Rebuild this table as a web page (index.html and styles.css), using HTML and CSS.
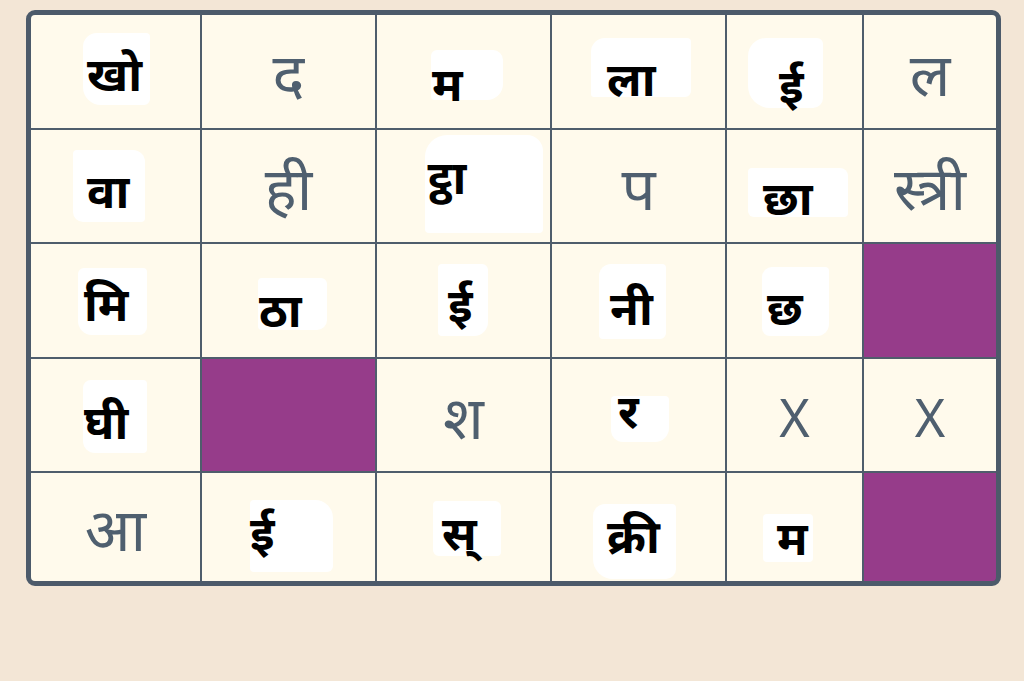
FILE: index.html
```html
<!DOCTYPE html>
<html lang="hi">
<head>
<meta charset="utf-8">
<title>Grid</title>
<link rel="stylesheet" href="styles.css">
</head>
<body>
<div class="board">
  <div class="cell"><div class="patch p-a"><span>खो</span></div></div>
  <div class="cell center"><span class="plain">द</span></div>
  <div class="cell"><div class="patch p-b"><span>म</span></div></div>
  <div class="cell"><div class="patch p-c"><span>ला</span></div></div>
  <div class="cell"><div class="patch p-d"><span>ई</span></div></div>
  <div class="cell center"><span class="plain">ल</span></div>

  <div class="cell"><div class="patch p-e"><span>वा</span></div></div>
  <div class="cell center"><span class="plain">ही</span></div>
  <div class="cell"><div class="patch p-f"><span>ट्ठा</span></div></div>
  <div class="cell center"><span class="plain">प</span></div>
  <div class="cell"><div class="patch p-g"><span>छा</span></div></div>
  <div class="cell center"><span class="plain">स्त्री</span></div>

  <div class="cell"><div class="patch p-h"><span>मि</span></div></div>
  <div class="cell"><div class="patch p-i"><span>ठा</span></div></div>
  <div class="cell"><div class="patch p-j"><span>ई</span></div></div>
  <div class="cell"><div class="patch p-k"><span>नी</span></div></div>
  <div class="cell"><div class="patch p-l"><span>छ</span></div></div>
  <div class="cell filled"></div>

  <div class="cell"><div class="patch p-m"><span>घी</span></div></div>
  <div class="cell filled"></div>
  <div class="cell center"><span class="plain">श</span></div>
  <div class="cell"><div class="patch p-n"><span>र</span></div></div>
  <div class="cell center"><span class="plain latin">X</span></div>
  <div class="cell center"><span class="plain latin">X</span></div>

  <div class="cell center"><span class="plain">आ</span></div>
  <div class="cell"><div class="patch p-o"><span>ई</span></div></div>
  <div class="cell"><div class="patch p-p"><span>स्</span></div></div>
  <div class="cell"><div class="patch p-q"><span>क्री</span></div></div>
  <div class="cell"><div class="patch p-r"><span>म</span></div></div>
  <div class="cell filled"></div>
</div>
</body>
</html>
```
FILE: styles.css
```css
html, body {
  margin: 0;
  padding: 0;
}
body {
  background: #f3e6d6;
  width: 1024px;
  height: 681px;
  padding: 10px 0 0 26px;
  box-sizing: border-box;
  font-family: "Noto Sans", "Noto Sans Devanagari", sans-serif;
}
.board {
  width: 965px;
  box-sizing: content-box;
  border: 5px solid #4c5a6a;
  border-radius: 9px;
  overflow: hidden;
  background: #4f5d6c;
  display: grid;
  grid-template-columns: 169px 173px 173px 173px 135px 132px;
  grid-template-rows: 113px 112px 113px 112px 108px;
  gap: 2px;
}
.cell {
  background: #fffaec;
  overflow: hidden;
}
.cell.center {
  display: flex;
  align-items: center;
  justify-content: center;
}
.cell.filled {
  background: #963c8a;
}
.plain {
  color: #4f5f6f;
  font-size: 60px;
  line-height: 1;
  padding-top: 2px;
}
.latin {
  font-size: 52px;
  padding-top: 4px;
}
.patch {
  display: flow-root;
  background: #ffffff;
  color: #000;
  font-weight: 700;
  font-size: 47px;
  line-height: 50px;
  border-radius: 10px 3px 14px 5px;
}
.patch span {
  display: block;
  white-space: nowrap;
}
.p-a { margin: 18px 0 0 52px; width: 67px; height: 72px; border-radius: 14px 4px 6px 18px; }
.p-a span { margin: 15px 0 0 4px; }
.p-b { margin: 35px 0 0 54px; width: 72px; height: 50px; border-radius: 6px 10px 16px 4px; }
.p-b span { margin: 8px 0 0 1px; }
.p-c { margin: 23px 0 0 39px; width: 100px; height: 59px; border-radius: 14px 4px 6px 3px; }
.p-c span { margin: 15px 0 0 16px; }
.p-d { margin: 23px 0 0 21px; width: 75px; height: 70px; border-radius: 18px 6px 10px 22px; }
.p-d span { margin: 22px 0 0 31px; }
.p-e { margin: 20px 0 0 42px; width: 72px; height: 72px; border-radius: 4px 12px 4px 10px; }
.p-e span { margin: 15px 0 0 14px; }
.p-f { margin: 5px 0 0 48px; width: 118px; height: 98px; border-radius: 22px 16px 4px 4px; }
.p-f span { margin: 16px 0 0 3px; }
.p-g { margin: 38px 0 0 21px; width: 100px; height: 49px; border-radius: 4px 8px 4px 6px; }
.p-g span { margin: 4px 0 0 15px; }
.p-h { margin: 24px 0 0 47px; width: 69px; height: 67px; border-radius: 6px 4px 8px 14px; }
.p-h span { margin: 10px 0 0 6px; }
.p-i { margin: 34px 0 0 56px; width: 69px; height: 52px; border-radius: 4px 6px 10px 4px; }
.p-i span { margin: 6px 0 0 1px; }
.p-j { margin: 20px 0 0 61px; width: 50px; height: 72px; border-radius: 4px 6px 14px 4px; }
.p-j span { margin: 15px 0 0 10px; }
.p-k { margin: 20px 0 0 47px; width: 67px; height: 75px; border-radius: 12px 4px 6px 4px; }
.p-k span { margin: 18px 0 0 11px; }
.p-l { margin: 23px 0 0 35px; width: 67px; height: 69px; border-radius: 10px 4px 12px 8px; }
.p-l span { margin: 15px 0 0 5px; }
.p-m { margin: 21px 0 0 52px; width: 64px; height: 73px; border-radius: 8px 4px 4px 12px; }
.p-m span { margin: 16px 0 0 1px; }
.p-n { margin: 37px 0 0 59px; width: 58px; height: 46px; border-radius: 4px 4px 14px 12px; }
.p-n span { margin: -11px 0 0 7px; }
.p-o { margin: 27px 0 0 48px; width: 83px; height: 72px; border-radius: 4px 18px 6px 4px; }
.p-o span { margin: 7px 0 0 0; }
.p-p { margin: 28px 0 0 56px; width: 68px; height: 55px; border-radius: 4px 6px 4px 6px; }
.p-p span { margin: 6px 0 0 9px; }
.p-q { margin: 31px 0 0 41px; width: 83px; height: 75px; border-radius: 12px 4px 10px 20px; }
.p-q span { margin: 6px 0 0 14px; }
.p-r { margin: 41px 0 0 36px; width: 50px; height: 48px; border-radius: 4px 4px 4px 4px; }
.p-r span { margin: -2px 0 0 14px; }
```
